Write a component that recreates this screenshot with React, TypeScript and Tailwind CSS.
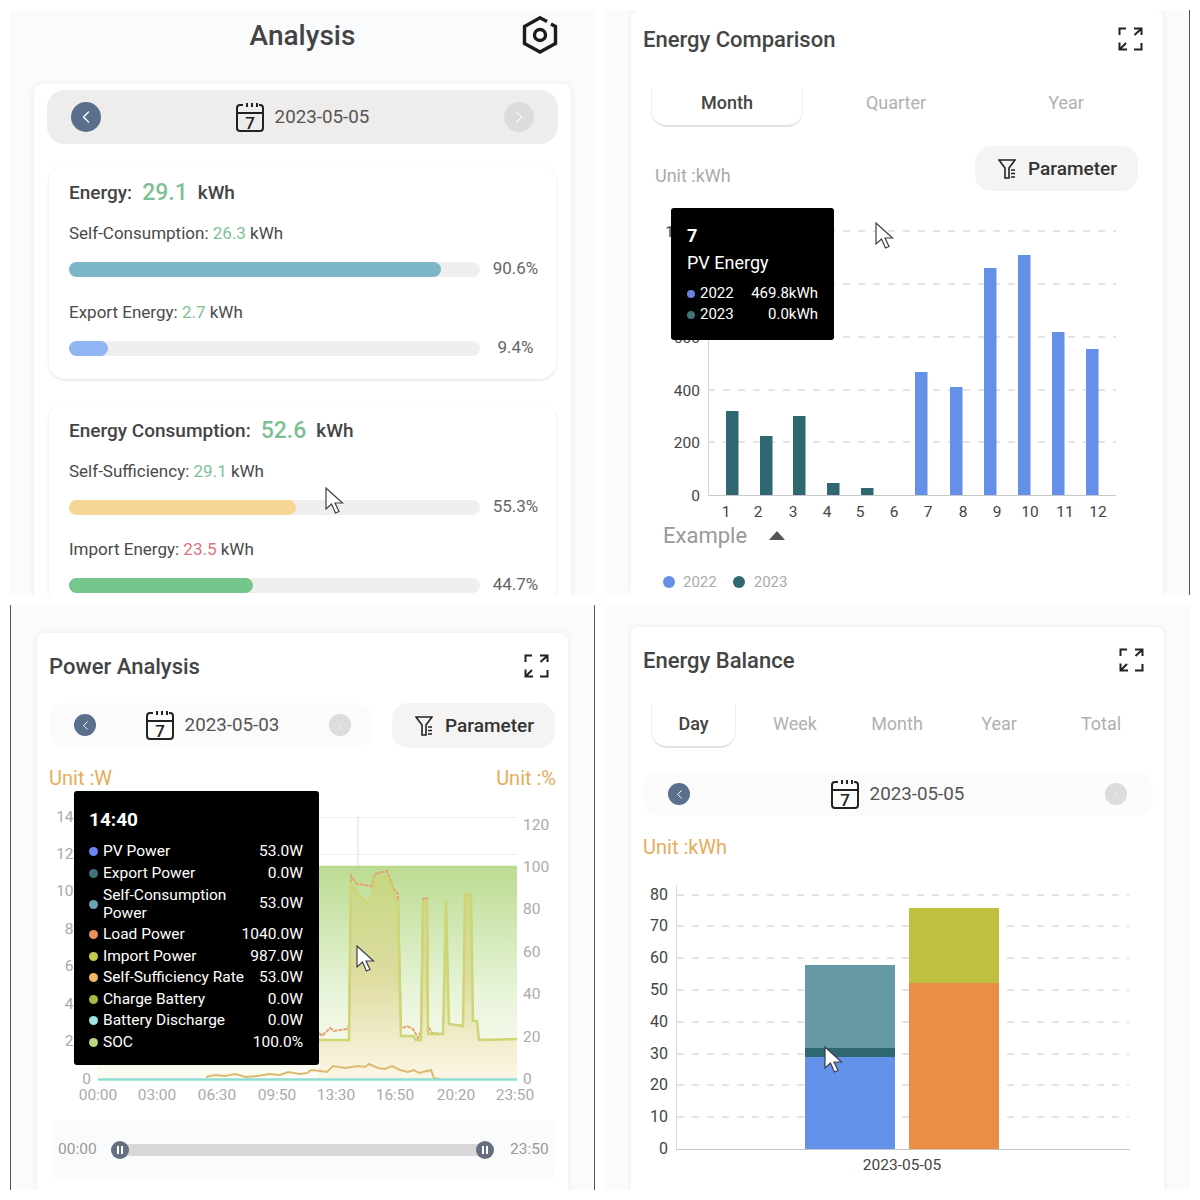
import { ChevronLeft, ChevronRight } from 'lucide-react';

const monthBars = [
  { x: 732, top: 411, color: '#2f6772' },
  { x: 766, top: 436, color: '#2f6772' },
  { x: 799, top: 416, color: '#2f6772' },
  { x: 833, top: 483, color: '#2f6772' },
  { x: 867, top: 488, color: '#2f6772' },
  { x: 921, top: 372, color: '#6490e8' },
  { x: 956, top: 387, color: '#6490e8' },
  { x: 990, top: 268, color: '#6490e8' },
  { x: 1024, top: 255, color: '#6490e8' },
  { x: 1058, top: 332, color: '#6490e8' },
  { x: 1092, top: 349, color: '#6490e8' },
];
const monthTicks = [726, 758, 793, 827, 860, 894, 928, 963, 997, 1030, 1065, 1098];

const importLine =
  '319,1039 349,1039 351,883 358,893 367,902 373,892 375,877 387,875 392,888 398,902 401,1035 413,1035 416,1039 421,1039 423,902 427,900 428,1033 443,1033 446,900 449,1023 463,1025 465,893 471,893 473,1020 477,1020 479,1039 517,1038';
const loadLine =
  '319,1032 322,1035 330,1027 334,1030 347,1028 349,1025 351,875 357,883 372,885 375,873 387,870 393,887 398,893 401,1028 407,1025 413,1028 418,1037 421,1030 423,898 427,897 428,1025 432,1032 443,1033';
const selfLine =
  '206,1076 215,1074 225,1075 235,1073 246,1076 258,1075 269,1073 280,1074 288,1071 300,1073 307,1072 311,1069 320,1070 327,1071 333,1065 345,1067 358,1065 365,1066 369,1063 378,1067 385,1068 392,1065 400,1069 408,1071 414,1069 419,1072 431,1069 434,1077 440,1078';

const powerRows = [
  { name: 'PV Power', value: '53.0W', color: 'bg-[#6a86f0]' },
  { name: 'Export Power', value: '0.0W', color: 'bg-[#3f7578]' },
  { name: 'Self-Consumption Power', value: '53.0W', color: 'bg-[#6da3b4]' },
  { name: 'Load Power', value: '1040.0W', color: 'bg-[#e8905c]' },
  { name: 'Import Power', value: '987.0W', color: 'bg-[#c4cb4c]' },
  { name: 'Self-Sufficiency Rate', value: '53.0W', color: 'bg-[#eeb964]' },
  { name: 'Charge Battery', value: '0.0W', color: 'bg-[#a2bc44]' },
  { name: 'Battery Discharge', value: '0.0W', color: 'bg-[#9fe4e0]' },
  { name: 'SOC', value: '100.0%', color: 'bg-[#bcd67c]' },
];

const CalendarIcon = () => (
  <svg width="28" height="30" viewBox="0 0 28 30" fill="none" stroke="#222" strokeWidth="2">
    <path d="M7 3H4a3 3 0 0 0-3 3v20a3 3 0 0 0 3 3h20a3 3 0 0 0 3-3V6a3 3 0 0 0-3-3h-1" />
    <path d="M1 11h26" />
    <path d="M11 1v4M16 1v4M21 1v4" />
    <text x="14" y="27" textAnchor="middle" fontSize="17" fontWeight="500" fill="#222" stroke="none">
      7
    </text>
  </svg>
);

const ExpandIcon = () => (
  <svg width="25" height="24" viewBox="0 0 25 24" fill="none" stroke="#222" strokeWidth="2">
    <path d="M1.500 8V1.500H8" />
    <path d="M16 1.500h7.500V8M23 2l-6.500 6" />
    <path d="M1.500 15.500v7H9M2 22l6-6" />
    <path d="M23.500 16v6.500H16" />
  </svg>
);

const FunnelIcon = () => (
  <svg width="18" height="20" viewBox="0 0 18 20" fill="none" stroke="#222" strokeWidth="1.600">
    <path d="M1 1h16l-6 8v10H7V9L1 1Z" />
    <path d="M13 11h4M13 14.500h4M13 18h4" />
  </svg>
);

const Cursor = ({ className }: { className: string }) => (
  <svg className={className} width="19" height="27" viewBox="0 0 19 27">
    <path d="M1 1v21l5.500-5 4 9 3.500-1.500-4-8.500h7.500L1 1Z" fill="#fff" stroke="#3a3f48" strokeWidth="1.200" />
  </svg>
);

const CardHeader = ({ title }: { title: string }) => (
  <div className="flex h-[58px] items-center justify-between pl-[12px] pr-[20px]">
    <h2 className="text-[22px] font-medium text-[#444]">{title}</h2>
    <ExpandIcon />
  </div>
);

const DateArrows = ({ large = false }: { large?: boolean }) => {
  const size = large ? 'h-[30px] w-[30px]' : 'h-[22px] w-[22px]';
  return {
    prev: (
      <span className={`flex ${size} items-center justify-center rounded-full bg-[#5a6f8c] text-white`}>
        <ChevronLeft size={large ? 20 : 15} strokeWidth={1.6} />
      </span>
    ),
    next: (
      <span className={`flex ${size} items-center justify-center rounded-full bg-[#dedcda] text-[#f3f2f1]`}>
        <ChevronRight size={large ? 20 : 15} strokeWidth={1.6} />
      </span>
    ),
  };
};

const DateLabel = ({ date }: { date: string }) => (
  <div className="flex items-center gap-[11px]">
    <CalendarIcon />
    <span className="text-[18.800px] text-[#555]">{date}</span>
  </div>
);

const ParameterButton = () => (
  <div className="flex h-[45px] w-[163px] items-center justify-center gap-[12px] rounded-2xl bg-[#f6f4f2] pl-[2px]">
    <FunnelIcon />
    <span className="pt-[2px] text-[19px] font-medium text-[#333]">Parameter</span>
  </div>
);

const ActiveTab = ({ label, className }: { label: string; className: string }) => (
  <div
    className={`rounded-b-2xl border-b-2 border-x border-[#e3e3e3] border-x-[#efefef] bg-white text-center text-[18px] font-medium text-[#444] ${className}`}
  >
    {label}
  </div>
);

const Meter = ({
  label,
  value,
  valueColor,
  percent,
  fill,
  width,
}: {
  label: string;
  value: string;
  valueColor: string;
  percent: string;
  fill: string;
  width: string;
}) => (
  <div>
    <p className="h-[24px] text-[17px] leading-[24px] text-[#4a4a4a]">
      {label}: <span className={valueColor}>{value}</span> kWh
    </p>
    <div className="mt-[16px] flex h-[16px] items-center">
      <div className="h-[15px] w-[411px] rounded-full bg-[#f1efed]">
        <div className={`h-full rounded-full ${fill} ${width}`} />
      </div>
      <span className="w-[71px] text-center text-[17px] text-[#666]">{percent}</span>
    </div>
  </div>
);

const Summary = ({
  title,
  value,
  gap,
  children,
}: {
  title: string;
  value: string;
  gap: string;
  children: React.ReactNode;
}) => (
  <div className="mx-[2px] h-[214px] rounded-2xl bg-white pl-[20px] pt-[13px] shadow-[0_1px_3px_rgba(0,0,0,0.13)]">
    <div className="mb-[13px] flex h-[30px] items-center text-[19px] font-medium text-[#444]">
      <span>{title}:</span>
      <span className="mx-[10px] text-[23px] text-[#7dbf96]">{value}</span>
      <span>kWh</span>
    </div>
    <div className={`flex flex-col ${gap}`}>{children}</div>
  </div>
);

const AnalysisPanel = () => {
  const { prev, next } = DateArrows({ large: true });
  return (
    <section className="h-[585px] overflow-hidden bg-[#fafbfc]">
      <header className="relative mb-[22px] flex h-[52px] items-center justify-center">
        <h1 className="text-[28px] font-medium text-[#444]">Analysis</h1>
        <svg className="absolute right-[37px] top-[6px]" width="36" height="38" viewBox="0 0 36 38" fill="none" stroke="#1c1c1c" strokeWidth="3.400">
          <path d="M25 5.500 18 1.800 2.500 10.500v17L18 36l15.500-8.500v-17L29 8" />
          <circle cx="18" cy="19" r="5.500" />
        </svg>
      </header>
      <div className="mx-[24px] h-[520px] rounded-t-lg bg-white px-[13px] pt-[6px] shadow-[0_0_6px_rgba(0,0,0,0.07)]">
        <div className="flex h-[54px] items-center justify-between rounded-[18px] bg-[#efedeb] pl-[24px] pr-[24px]">
          {prev}
          <DateLabel date="2023-05-05" />
          {next}
        </div>
        <div className="mt-[21px] flex flex-col gap-[24px]">
          <Summary title="Energy" value="29.1" gap="gap-[23px]">
            <Meter label="Self-Consumption" value="26.3" valueColor="text-[#7dbf96]" percent="90.6%" fill="bg-[#7cb6c8]" width="w-[372px]" />
            <Meter label="Export Energy" value="2.7" valueColor="text-[#7dbf96]" percent="9.4%" fill="bg-[#8fb6f2]" width="w-[39px]" />
          </Summary>
          <Summary title="Energy Consumption" value="52.6" gap="gap-[22px]">
            <Meter label="Self-Sufficiency" value="29.1" valueColor="text-[#7dbf96]" percent="55.3%" fill="bg-[#f6d694]" width="w-[227px]" />
            <Meter label="Import Energy" value="23.5" valueColor="text-[#d9737c]" percent="44.7%" fill="bg-[#74c68c]" width="w-[184px]" />
          </Summary>
        </div>
      </div>
    </section>
  );
};

const ComparisonPanel = () => (
  <section className="relative h-[585px] overflow-hidden border-r border-[#555] bg-[#fafbfc]">
    <div className="ml-[26px] h-full w-[532px] rounded-t-lg bg-white shadow-[0_0_6px_rgba(0,0,0,0.07)]">
      <CardHeader title="Energy Comparison" />
      <div className="mt-[20px] flex h-[39px] pl-[20px] leading-[30px]">
        <ActiveTab label="Month" className="w-[152px]" />
        <div className="ml-[8px] flex text-center text-[18px] text-[#b0b0b0]">
          <span className="w-[170px]">Quarter</span>
          <span className="w-[170px]">Year</span>
        </div>
      </div>
      <div className="mt-[19px] flex items-end justify-between pl-[24px] pr-[25px]">
        <span className="text-[18px] leading-[30px] text-[#aaa]">Unit :kWh</span>
        <ParameterButton />
      </div>
      <svg className="ml-[19px] mt-[14px] block" width="480" height="315" viewBox="650 205 480 315">
        {[231, 284, 337, 390, 442].map((y) => (
          <line key={y} x1="708" x2="1116" y1={y} y2={y} stroke="#c8c8c8" strokeDasharray="7 8" />
        ))}
        <line x1="708" x2="1116" y1="495.500" y2="495.500" stroke="#c8c8c8" />
        <line x1="708.500" x2="708.500" y1="231" y2="495" stroke="#d4d4d4" />
        {[
          ['1000', 231],
          ['800', 284],
          ['600', 337],
          ['400', 390],
          ['200', 442],
          ['0', 495],
        ].map(([label, y]) => (
          <text key={label} x="700" y={Number(y) + 6} textAnchor="end" fontSize="15.500" fill="#444">
            {label}
          </text>
        ))}
        {monthBars.map((bar) => (
          <rect key={bar.x} x={bar.x - 6} y={bar.top} width="12.500" height={495 - bar.top} fill={bar.color} />
        ))}
        {monthTicks.map((x, i) => (
          <text key={x} x={x} y="517" textAnchor="middle" fontSize="15.500" fill="#444">
            {i + 1}
          </text>
        ))}
      </svg>
      <div className="flex h-[30px] items-center gap-[22px] pl-[32px]">
        <span className="text-[22px] text-[#999]">Example</span>
        <span className="h-0 w-0 border-x-[8px] border-b-[9px] border-x-transparent border-b-[#555]" />
      </div>
      <div className="mt-[17px] flex h-[30px] items-center pl-[32px] text-[15px] text-[#aaa]">
        <span className="h-[12px] w-[12px] rounded-full bg-[#6490e8]" />
        <span className="ml-[8px]">2022</span>
        <span className="ml-[16px] h-[12px] w-[12px] rounded-full bg-[#2f6772]" />
        <span className="ml-[9px]">2023</span>
      </div>
    </div>
    <div className="absolute left-[66px] top-[198px] h-[132px] w-[163px] rounded-[3px] bg-black px-[16px] pt-[14px] text-white">
      <p className="text-[18px] font-bold leading-[28px]">7</p>
      <p className="text-[18px] leading-[26px]">PV Energy</p>
      <div className="mt-[7px] text-[15px] leading-[21px]">
        <div className="flex items-center">
          <span className="h-[8px] w-[8px] rounded-full bg-[#6a7fe0]" />
          <span className="ml-[5px] flex-1">2022</span>
          <span>469.8kWh</span>
        </div>
        <div className="flex items-center">
          <span className="h-[8px] w-[8px] rounded-full bg-[#3f7578]" />
          <span className="ml-[5px] flex-1">2023</span>
          <span>0.0kWh</span>
        </div>
      </div>
    </div>
  </section>
);

const PowerChart = () => (
  <svg className="block" width="531" height="316" viewBox="37 792 531 316">
    <defs>
      <linearGradient id="soc" gradientUnits="userSpaceOnUse" x1="0" y1="866" x2="0" y2="1078">
        <stop offset="0" stopColor="#bcdc92" />
        <stop offset="0.6" stopColor="#e8f4da" />
        <stop offset="1" stopColor="#fefcf4" />
      </linearGradient>
      <linearGradient id="used" gradientUnits="userSpaceOnUse" x1="0" y1="875" x2="0" y2="1078">
        <stop offset="0" stopColor="#c6d884" />
        <stop offset="0.5" stopColor="#dedca0" />
        <stop offset="1" stopColor="#fdf6e6" />
      </linearGradient>
    </defs>
    <line x1="97" x2="517" y1="816.500" y2="816.500" stroke="#efefef" />
    <line x1="97" x2="517" y1="853.500" y2="853.500" stroke="#efefef" />
    <line x1="358" x2="358" y1="815" y2="866" stroke="#dcdcdc" />
    <rect x="97" y="866" width="420" height="212" fill="url(#soc)" />
    <polygon points={`319,1078 ${importLine} 517,1078`} fill="url(#used)" />
    <line x1="97" x2="517" y1="866" y2="866" stroke="#b9da8c" strokeWidth="2.500" />
    <polyline points={loadLine} fill="none" stroke="#e6a26e" strokeWidth="2" strokeDasharray="4 1" />
    <polyline points={importLine} fill="none" stroke="#ccd674" strokeWidth="2.500" />
    <polyline points={selfLine} fill="none" stroke="#dcbb70" strokeWidth="2" />
    <line x1="98" x2="517" y1="1078.500" y2="1078.500" stroke="#8fdcd6" strokeWidth="2.500" />
    {[
      ['1400', 816],
      ['1200', 853],
      ['1000', 890],
      ['800', 928],
      ['600', 965],
      ['400', 1003],
      ['200', 1040],
      ['0', 1078],
    ].map(([label, y]) => (
      <text key={label} x="91" y={Number(y) + 5} textAnchor="end" fontSize="15.500" fill="#aaa">
        {label}
      </text>
    ))}
    {[
      ['120', 824],
      ['100', 866],
      ['80', 908],
      ['60', 951],
      ['40', 993],
      ['20', 1036],
      ['0', 1078],
    ].map(([label, y]) => (
      <text key={label} x="523" y={Number(y) + 4.5} fontSize="15.500" fill="#aaa">
        {label}
      </text>
    ))}
    {[
      ['00:00', 98],
      ['03:00', 157],
      ['06:30', 217],
      ['09:50', 277],
      ['13:30', 336],
      ['16:50', 395],
      ['20:20', 456],
      ['23:50', 515],
    ].map(([label, x]) => (
      <text key={label} x={x} y="1099" textAnchor="middle" fontSize="15.500" fill="#aaa">
        {label}
      </text>
    ))}
  </svg>
);

const SliderHandle = ({ className }: { className: string }) => (
  <span className={`absolute top-[-3px] flex h-[18px] w-[18px] items-center justify-center gap-[2px] rounded-full bg-[#666f80] ${className}`}>
    <span className="h-[8px] w-[2px] bg-white" />
    <span className="h-[8px] w-[2px] bg-white" />
  </span>
);

const PowerPanel = () => {
  const { prev, next } = DateArrows({});
  return (
    <section className="relative h-[585px] overflow-hidden border-x border-[#555] bg-[#fafbfc] pt-[28px]">
      <div className="ml-[26px] h-[600px] w-[531px] rounded-t-lg bg-white shadow-[0_0_6px_rgba(0,0,0,0.07)]">
        <div className="flex h-[66px] items-center justify-between pl-[12px] pr-[19px]">
          <h2 className="text-[22px] font-medium text-[#444]">Power Analysis</h2>
          <ExpandIcon />
        </div>
        <div className="mt-[4px] flex pl-[13px]">
          <div className="flex h-[44px] w-[322px] items-center justify-between rounded-2xl bg-[#fbfbfb] pl-[24px] pr-[21px]">
            {prev}
            <DateLabel date="2023-05-03" />
            {next}
          </div>
          <div className="ml-[20px]">
            <ParameterButton />
          </div>
        </div>
        <div className="mt-[15px] flex h-[30px] items-center justify-between pl-[12px] pr-[12px] text-[20px] text-[#e8ac5c]">
          <span>Unit :W</span>
          <span>Unit :%</span>
        </div>
        <PowerChart />
        <div className="ml-[15px] mt-[11px] flex h-[60px] w-[503px] items-center rounded-lg bg-[#fafbfc] pl-[6px] text-[15.500px] text-[#999]">
          <span className="w-[62px]">00:00</span>
          <div className="relative h-[12px] w-[365px] bg-[#d8d8d8]">
            <SliderHandle className="left-[-9px]" />
            <SliderHandle className="right-[-9px]" />
          </div>
          <span className="ml-[25px]">23:50</span>
        </div>
      </div>
      <div className="absolute left-[63px] top-[186px] h-[274px] w-[245px] rounded-[3px] bg-black pl-[15px] pr-[16px] pt-[15px] text-white">
        <p className="mb-[7px] h-[28px] text-[19px] font-bold leading-[28px]">14:40</p>
        <div className="text-[15.500px] leading-[21.500px]">
          {powerRows.map((row) => (
            <div key={row.name} className="flex items-center justify-between">
              <div className="flex items-center gap-[5px]">
                <span className={`h-[9px] w-[9px] rounded-full ${row.color}`} />
                <span className={row.name === 'Self-Consumption Power' ? 'w-[140px] py-[2px] leading-[18px]' : ''}>{row.name}</span>
              </div>
              <span>{row.value}</span>
            </div>
          ))}
        </div>
      </div>
    </section>
  );
};

const BalancePanel = () => {
  const { prev, next } = DateArrows({});
  const ticks = [895, 926, 958, 990, 1022, 1054, 1085, 1117, 1149];
  return (
    <section className="h-[585px] overflow-hidden bg-[#fafbfc] pt-[22px]">
      <div className="ml-[26px] h-[600px] w-[533px] rounded-t-lg bg-white shadow-[0_0_6px_rgba(0,0,0,0.07)]">
        <div className="flex h-[66px] items-center justify-between pl-[12px] pr-[20px]">
          <h2 className="text-[22px] font-medium text-[#444]">Energy Balance</h2>
          <ExpandIcon />
        </div>
        <div className="mt-[12px] flex h-[43px] pl-[20px] leading-[38px]">
          <ActiveTab label="Day" className="w-[85px]" />
          <div className="ml-[8px] flex text-center text-[18px] text-[#b0b0b0]">
            <span className="w-[102px]">Week</span>
            <span className="w-[102px]">Month</span>
            <span className="w-[102px]">Year</span>
            <span className="w-[102px]">Total</span>
          </div>
        </div>
        <div className="ml-[12px] mt-[24px] flex h-[44px] w-[510px] items-center justify-between rounded-2xl bg-[#fbfbfb] pl-[25px] pr-[26px]">
          {prev}
          <DateLabel date="2023-05-05" />
          {next}
        </div>
        <div className="mt-[16px] flex h-[30px] items-center pl-[12px] text-[20px] text-[#e8ac5c]">Unit :kWh</div>
        <svg className="block" width="533" height="328" viewBox="631 862 533 328">
          {ticks.slice(0, 8).map((y) => (
            <line key={y} x1="677" x2="1129" y1={y} y2={y} stroke="#c8c8c8" strokeDasharray="7 8" />
          ))}
          <line x1="676" x2="1130" y1="1149.500" y2="1149.500" stroke="#c4c4c4" />
          <line x1="676.500" x2="676.500" y1="885" y2="1149" stroke="#dcdcdc" />
          {[80, 70, 60, 50, 40, 30, 20, 10, 0].map((label, i) => (
            <text key={label} x="668" y={ticks[i] + 5} textAnchor="end" fontSize="16" fill="#444">
              {label}
            </text>
          ))}
          <rect x="805" y="965" width="90" height="83" fill="#6699a6" />
          <rect x="805" y="1048" width="90" height="9" fill="#2f6772" />
          <rect x="805" y="1057" width="90" height="92" fill="#6491e9" />
          <rect x="909" y="908" width="90" height="75" fill="#bec13f" />
          <rect x="909" y="983" width="90" height="166" fill="#ea8e45" />
          <text x="902" y="1170" textAnchor="middle" fontSize="15.500" fill="#444">
            2023-05-05
          </text>
        </svg>
      </div>
    </section>
  );
};

export default function App() {
  return (
    <div className="relative grid h-[1200px] w-[1200px] grid-cols-[585px_585px] gap-[10px] bg-white p-[10px] [font-family:Roboto,sans-serif]">
      <AnalysisPanel />
      <ComparisonPanel />
      <PowerPanel />
      <BalancePanel />
      <Cursor className="absolute left-[325px] top-[487px]" />
      <Cursor className="absolute left-[875px] top-[222px]" />
      <Cursor className="absolute left-[356px] top-[945px]" />
      <Cursor className="absolute left-[824px] top-[1046px]" />
    </div>
  );
}
